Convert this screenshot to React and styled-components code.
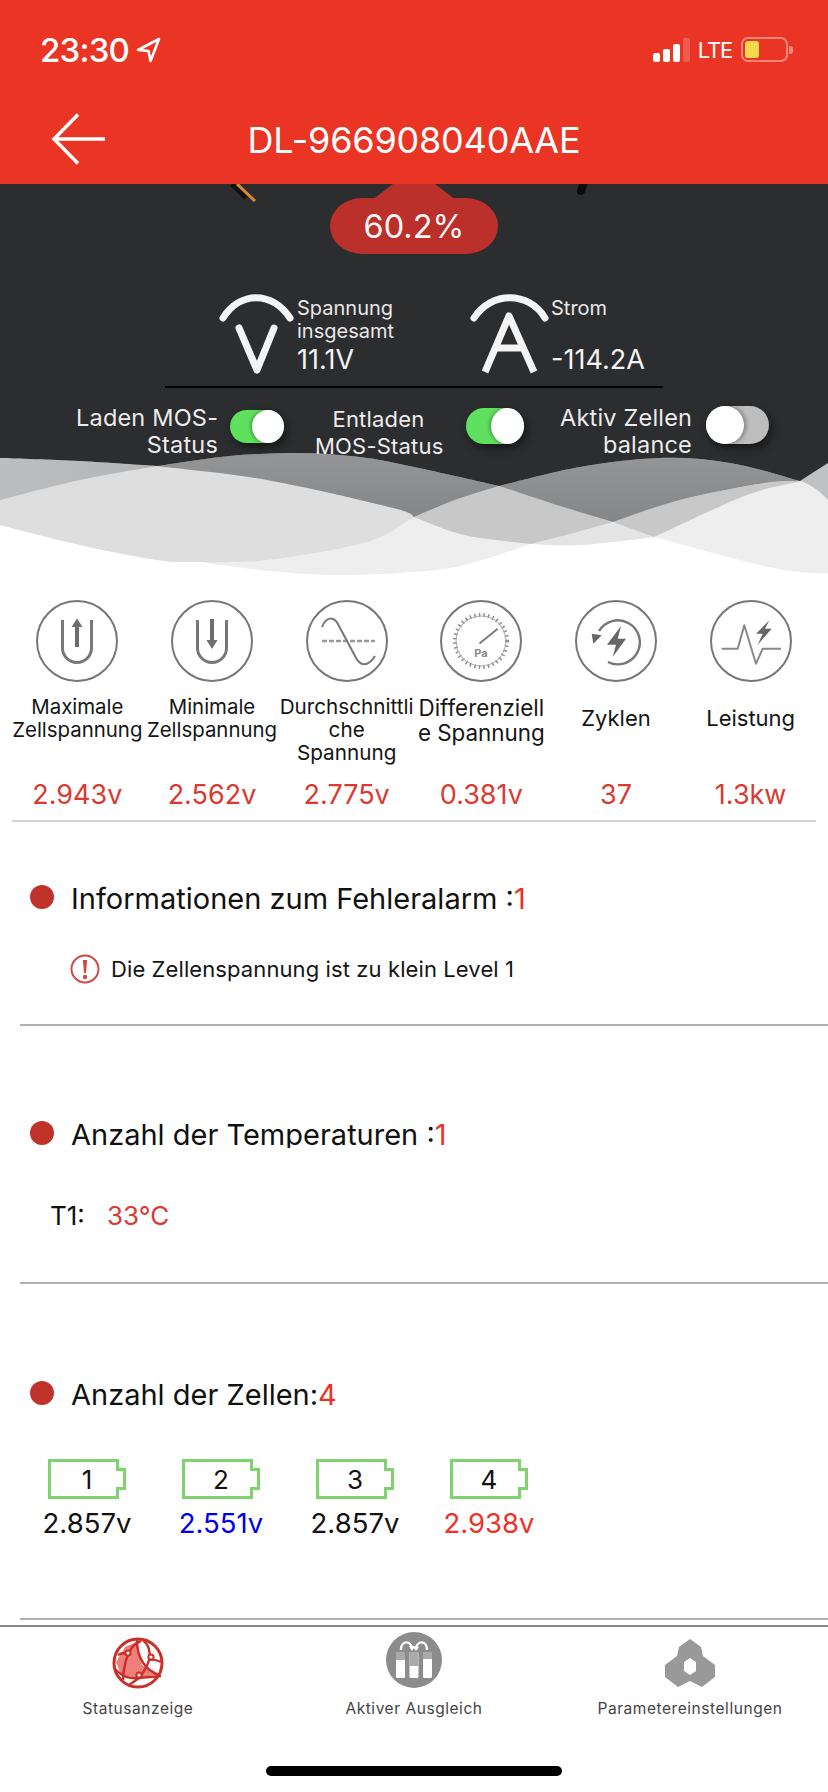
import React from 'react';
import styled, { createGlobalStyle } from 'styled-components';

const Global = createGlobalStyle`
  html, body { margin: 0; padding: 0; background: #fff; }
  body { font-family: Inter, "Noto Sans", sans-serif; }
  * { box-sizing: border-box; }
`;

const RED = '#d93a32';
const Page = styled.div`width: 828px; height: 1792px; overflow: hidden; background: #fff; color: #111;`;

const Header = styled.header`height: 184px; background: #ea3525; color: #fff; display: flex; flex-direction: column;`;
const StatusBar = styled.div`height: 98px; padding: 37px 40px 0 40px; display: flex; justify-content: space-between; align-items: flex-start;`;
const Clock = styled.div`display: flex; align-items: center; gap: 7px; height: 25px; font-size: 33px; font-weight: 500; letter-spacing: -0.8px;`;
const StatusRight = styled.div`display: flex; align-items: center; height: 25px; gap: 8px;`;
const Signal = styled.div`display: flex; align-items: flex-end; gap: 3px; height: 24px;`;
const Bar = styled.span`width: 7px; height: ${p => p.$h}px; border-radius: 2px; background: ${p => p.$dim ? 'rgba(255,255,255,.2)' : '#fff'};`;
const Lte = styled.span`font-size: 22px; font-weight: 400; letter-spacing: -1.2px; margin-right: 1px;`;
const Cell = styled.div`position: relative; width: 47px; height: 25px; border: 2px solid rgba(255,255,255,.4); border-radius: 7px; padding: 2px;
  &::after { content: ''; position: absolute; right: -7px; top: 7px; width: 4px; height: 8px; border-radius: 0 3px 3px 0; background: rgba(255,255,255,.4); }`;
const CellFill = styled.div`width: 14px; height: 17px; border-radius: 3px; background: #f6d64a;`;
const NavBar = styled.div`position: relative; height: 86px; display: flex; align-items: center; justify-content: center; padding-bottom: 2px;`;
const Back = styled.svg`position: absolute; left: 51px; top: 15px;`;
const Title = styled.h1`margin: 0; font-size: 36px; font-weight: 400; letter-spacing: -0.2px;`;

const Dark = styled.section`position: relative; height: 276px; background: #2c2d2f; color: #f0f0f0; padding-top: 14px;`;
const GaugeBits = styled.svg`position: absolute; left: 0; top: 0;`;
const Badge = styled.div`position: relative; width: 168px; height: 56px; margin: 0 auto; background: #bb302a; border-radius: 32px / 28px; display: flex; align-items: center; justify-content: center; font-size: 32.5px; color: #f4f4f4;
  &::before { content: ''; position: absolute; left: 42px; top: -14px; width: 84px; height: 16px; background: #bb302a; clip-path: polygon(21px 0, 63px 0, 84px 100%, 0 100%); }`;
const Readings = styled.div`display: flex; margin: 40px 0 0 220px; height: 80px;`;
const Reading = styled.div`display: flex; width: ${p => p.$w}px; gap: 4px;`;
const ReadingIcon = styled.svg`flex: none; overflow: visible;`;
const ReadingText = styled.div`display: flex; flex-direction: column; font-size: 20px; line-height: 23px; padding-top: 3px; color: #e8e8e8;`;
const ReadingLabel = styled.div`height: 52px;`;
const ReadingValue = styled.div`font-size: 27px; line-height: 28px; color: #f4f4f4;`;
const BlackRule = styled.div`width: 498px; height: 2px; margin: 12px 0 0 165px; background: #000;`;
const Switches = styled.div`position: relative; z-index: 2; display: flex; margin: 16px 0 0 76px;`;
const SwitchItem = styled.div`display: flex; align-items: flex-start; margin-right: ${p => p.$after}px;`;
const SwitchLabel = styled.div`flex: none; width: ${p => p.$w}px; text-align: ${p => p.$align}; white-space: nowrap; font-size: ${p => p.$fs}px; line-height: 27px; margin-top: ${p => p.$top}px; margin-right: ${p => p.$gap}px; color: #ececec; letter-spacing: 0.2px;`;
const Track = styled.div`position: relative; flex: none; width: ${p => p.$w}px; height: ${p => p.$h}px; margin-top: ${p => p.$top}px; border-radius: ${p => p.$h / 2}px; background: ${p => p.$on ? '#5fe05f' : '#bdbdbd'}; box-shadow: 3px 5px 8px rgba(0,0,0,.45);`;
const Knob = styled.div`position: absolute; top: 0; bottom: 0; ${p => p.$on ? 'right: 0;' : 'left: 0;'} width: ${p => p.$w}px; border-radius: 50%; background: #fff; box-shadow: ${p => p.$on ? '-2px 0 3px rgba(0,0,0,.25)' : '2px 0 4px rgba(0,0,0,.35)'};`;

const WaveArt = styled.svg`position: relative; display: block; margin-top: -20px;`;

const Stats = styled.div`display: grid; grid-template-columns: repeat(6, 1fr); padding: 10px 10px 0;`;
const Stat = styled.div`display: flex; flex-direction: column; align-items: center; min-width: 0;`;
const StatLabel = styled.div`width: 140px; height: 81px; margin: 13px -3px 0; text-align: center; font-size: ${p => p.$fs}px; line-height: ${p => p.$lh}px; white-space: nowrap; color: #151515;`;
const StatValue = styled.div`font-size: 27px; line-height: 38px; color: ${RED};`;
const StatRule = styled.div`height: 2px; margin: 6px 12px 0; background: #d0d0d8;`;

const Section = styled.section`margin-left: 20px; padding: ${p => p.$pt}px 0 ${p => p.$pb}px; border-bottom: 2px solid #b0b0b0;`;
const SectionHead = styled.div`display: flex; align-items: center; gap: 17px; height: 40px; padding-left: 10px;`;
const Dot = styled.span`flex: none; width: 24px; height: 24px; margin-top: -4px; border-radius: 50%; background: #bf332b;`;
const HeadText = styled.div`font-size: 29px; line-height: 40px; color: #111; align-self: flex-start; height: ${p => p.$clip ? '33px' : 'auto'}; overflow: ${p => p.$clip ? 'hidden' : 'visible'};`;
const Count = styled.span`color: #ee3124;`;
const Alert = styled.div`display: flex; align-items: center; gap: 11px; height: 30px; margin: 35px 0 0 50px; font-size: 22px; color: #151515; letter-spacing: 0.1px;`;
const TempRow = styled.div`display: flex; height: 30px; margin: 45px 0 0 30px; align-items: center; font-size: 26px;`;
const TempName = styled.span`width: 57px; color: #111;`;
const TempValue = styled.span`color: ${RED};`;
const Cells = styled.div`display: grid; grid-template-columns: repeat(4, 134px); margin-top: 44px;`;
const CellItem = styled.div`display: flex; flex-direction: column; align-items: center;`;
const BatteryBody = styled.div`position: relative; width: 78px; height: 40px; display: flex; align-items: center; justify-content: center; font-size: 26px; color: #111;`;
const BatteryArt = styled.svg`position: absolute; inset: 0;`;
const CellNumber = styled.span`position: relative;`;
const CellVolt = styled.div`margin-top: 9px; font-size: 27.5px; line-height: 30px; color: ${p => p.$c};`;

const TabBar = styled.nav`position: relative; height: 167px; margin-top: 5px; border-top: 2px solid #888; display: grid; grid-template-columns: repeat(3, 276px);`;
const Tab = styled.div`display: flex; flex-direction: column; align-items: center; font-size: 15.5px; color: #444; letter-spacing: 0.55px;`;
const TabIcon = styled.svg`display: block; height: 62px; width: 70px;`;
const TabText = styled.div`margin-top: 10px; line-height: 20px;`;
const HomeBar = styled.div`position: absolute; left: 266px; top: 139px; width: 296px; height: 10px; border-radius: 5px; background: #000;`;

const seg = (pts) => {
  let d = '';
  for (let i = 0; i < pts.length - 1; i++) {
    const p0 = pts[i - 1] || pts[i], p1 = pts[i], p2 = pts[i + 1], p3 = pts[i + 2] || p2;
    d += ` C${p1[0] + (p2[0] - p0[0]) / 6} ${p1[1] + (p2[1] - p0[1]) / 6} ${p2[0] - (p3[0] - p1[0]) / 6} ${p2[1] - (p3[1] - p1[1]) / 6} ${p2[0]} ${p2[1]}`;
  }
  return d;
};
const rev = (a) => [...a].reverse();
const shape = (...parts) => `M${parts[0][0][0]} ${parts[0][0][1]}` + parts.map(seg).join('') + ' Z';

const c1a = [[0, 458], [80, 461], [157, 466]];
const c1b = [[157, 466], [267, 480], [393, 508], [414, 517]];
const c1c = [[414, 517], [464, 535], [531, 544]];
const c1d = [[531, 544], [580, 545], [654, 537]];
const c1e = [[654, 537], [747, 495], [800, 482]];
const c2a = [[0, 500], [80, 480], [157, 466]];
const c2b = [[157, 466], [230, 456], [300, 453], [360, 457], [414, 467], [499, 486]];
const c2c = [[499, 486], [560, 506], [613, 522]];
const c2d = [[613, 522], [635, 530], [654, 537]];
const c2e = [[654, 537], [747, 562], [790, 571], [814, 573], [828, 573]];
const c3a = [[0, 525], [80, 545], [157, 560], [200, 562], [267, 560], [367, 542], [414, 517]];
const c3b = [[414, 517], [455, 500], [499, 486]];
const c3c = [[499, 486], [580, 467], [660, 458], [730, 463], [800, 481]];
const c4a = [[200, 562], [270, 571], [333, 575], [414, 572], [464, 565], [531, 544]];
const c4b = [[531, 544], [570, 534], [613, 522]];
const c4c = [[613, 522], [680, 500], [764, 483], [800, 481]];

const Waves = () => (
  <WaveArt width="828" height="150" viewBox="0 440 828 150">
    <defs>
      <linearGradient id="gm" x1="0" y1="0" x2="0" y2="1"><stop offset="0" stopColor="#949597" /><stop offset="1" stopColor="#858688" /></linearGradient>
      <linearGradient id="gl" x1="0" y1="0" x2="1" y2="0"><stop offset="0" stopColor="#bcbdbf" /><stop offset="1" stopColor="#b4b5b7" /></linearGradient>
    </defs>
    <path fill="#eeeeee" d={`M0 440 L828 440 L828 573 L${814} 573` + seg(rev(c2e).slice(1)) + seg(rev(c1d)) + seg(rev(c4a)) + seg(rev(c3a.slice(0, 4))) + ' Z'} />
    <path fill="#dedede" d={`M0 440 L414 440 L414 517` + seg(rev(c3a)) + ' Z'} />
    <path fill="#e4e4e4" d={shape(c4b, c2d, rev(c1d))} />
    <path fill="#c8c8c8" d={shape(c3b, c2c, rev(c4b), rev(c1c))} />
    <path fill="#c8c8c8" d={shape(c4c, rev(c1e), rev(c2d))} />
    <path fill="url(#gm)" d={shape(c2b, rev(c3b), rev(c1b))} />
    <path fill="url(#gm)" d={shape(c3c, rev(c4c), rev(c2c))} />
    <path fill="url(#gl)" d={shape(c1a, rev(c2a))} />
    <path fill="#c0c1c3" d="M800 481 L828 463 L828 500 C820 491 810 484 800 481 Z" />
    <path fill="#2c2d2f" d={`M0 440 L828 440 L828 463 L800 481` + seg(rev(c3c)) + seg(rev(c2b)) + seg(rev(c1a)) + ' Z'} />
  </WaveArt>
);

const G = '#777';
const Ring = ({ children }) => (
  <svg width="82" height="82" viewBox="0 0 82 82" fill="none">
    <circle cx="41" cy="41" r="40" stroke={G} strokeWidth="2" />
    {children}
  </svg>
);
const UTube = () => <path d="M26.5 20 V48 a14.5 14.5 0 0 0 29 0 V20" stroke={G} strokeWidth="3" />;

const icons = [
  <Ring><UTube /><path d="M39 47 V27 H35.5 L41 18.5 L46.5 27 H43 V47 Z" fill="#6e6e6e" /></Ring>,
  <Ring><UTube /><path d="M39 19 V40 H35.5 L41 49 L46.5 40 H43 V19 Z" fill="#6e6e6e" /></Ring>,
  <Ring>
    <path d="M16 41 H69" stroke="#999" strokeWidth="2.4" strokeDasharray="5 2" />
    <path d="M16 27 C20 17 28 15 33 26 L49 56 C54 67 62 67 69 56" stroke={G} strokeWidth="2" />
  </Ring>,
  <Ring>
    <circle cx="41" cy="41" r="26" stroke="#8a8a8a" strokeWidth="4" strokeDasharray="1.4 3.2" />
    <circle cx="41" cy="41" r="25" stroke="#aaa" strokeWidth="1" />
    <path d="M39.5 43.5 L57.7 28.7" stroke={G} strokeWidth="1.8" />
    <text x="41" y="57" fontSize="11" fontWeight="700" fill="#888" textAnchor="middle" fontFamily="Inter, sans-serif">Pa</text>
  </Ring>,
  <Ring>
    <path d="M24 31 A22 22 0 1 1 33 62" stroke={G} strokeWidth="2.4" />
    <path d="M16.7 33.7 L26.7 35.3 L18.3 43.7 Z" fill="#666" />
    <path d="M46 26 L32 44.7 H41 L37.7 57 L51 38.7 H42.7 Z" fill="#666" />
  </Ring>,
  <Ring>
    <path d="M11.7 48.7 H27.7 L34.3 25.3 L46 63.7 L52.7 48.7 H71" stroke="#888" strokeWidth="2" strokeLinejoin="round" />
    <path d="M59.3 20.3 L46 33.7 H52.7 L47.7 44.7 L61.7 28.7 H55 Z" fill="#666" />
  </Ring>,
];

const stats = [
  { label: <>Maximale<br />Zellspannung</>, value: '2.943v', lh: 23, fs: 20.4 },
  { label: <>Minimale<br />Zellspannung</>, value: '2.562v', lh: 23, fs: 20.4 },
  { label: <>Durchschnittli<br />che<br />Spannung</>, value: '2.775v', lh: 23, fs: 20.7 },
  { label: <>Differenziell<br />e Spannung</>, value: '0.381v', lh: 25, fs: 22.4 },
  { label: 'Zyklen', value: '37', lh: 46, fs: 22 },
  { label: 'Leistung', value: '1.3kw', lh: 46, fs: 22 },
];

const cells = [
  { n: 1, v: '2.857v', c: '#111' },
  { n: 2, v: '2.551v', c: '#0000ee' },
  { n: 3, v: '2.857v', c: '#111' },
  { n: 4, v: '2.938v', c: '#ee3124' },
];

const Battery = ({ n }) => (
  <BatteryBody>
    <BatteryArt width="78" height="40" viewBox="0 0 78 40" fill="none">
      <path d="M1.5 1.5 H69.5 V10.5 H76.5 V29.5 H69.5 V38.5 H1.5 Z" stroke="#7ed36f" strokeWidth="3" />
    </BatteryArt>
    <CellNumber>{n}</CellNumber>
  </BatteryBody>
);

export default function App() {
  return (
    <Page>
      <Global />
      <Header>
        <StatusBar>
          <Clock>
            23:30
            <svg width="26" height="26" viewBox="0 0 26 26" fill="none">
              <path d="M23 2 L2 13 L12.5 14 L14.5 24 Z" stroke="#fff" strokeWidth="2.6" strokeLinejoin="round" />
            </svg>
          </Clock>
          <StatusRight>
            <Signal>
              <Bar $h={9} /><Bar $h={13} /><Bar $h={18} /><Bar $h={24} $dim />
            </Signal>
            <Lte>LTE</Lte>
            <Cell><CellFill /></Cell>
          </StatusRight>
        </StatusBar>
        <NavBar>
          <Back width="56" height="52" viewBox="0 0 56 52" fill="none">
            <path d="M3 26 H54 M27 1.5 L3 26 L27 50.5" stroke="#fff" strokeWidth="3.5" />
          </Back>
          <Title>DL-966908040AAE</Title>
        </NavBar>
      </Header>

      <Dark>
        <GaugeBits width="828" height="18" viewBox="0 184 828 18" fill="none">
          <path d="M232 184 L246 198" stroke="#111" strokeWidth="5" />
          <path d="M237 184 L255 201" stroke="#d98a2b" strokeWidth="3" />
          <path d="M584 182 L581 191" stroke="#0c0c0c" strokeWidth="8" strokeLinecap="round" />
        </GaugeBits>
        <Badge>60.2%</Badge>
        <Readings>
          <Reading $w={251}>
            <ReadingIcon width="73" height="80" viewBox="0 0 73 80" fill="none">
              <path d="M3 24 C20 -3 52 -3 70 24" stroke="#f4f4f4" strokeWidth="7" strokeLinecap="round" />
              <path d="M19 34 L37 76 L54 34" stroke="#f4f4f4" strokeWidth="7" strokeLinecap="round" strokeLinejoin="round" />
            </ReadingIcon>
            <ReadingText>
              <ReadingLabel>Spannung<br />insgesamt</ReadingLabel>
              <ReadingValue>11.1V</ReadingValue>
            </ReadingText>
          </Reading>
          <Reading $w={250}>
            <ReadingIcon width="76" height="80" viewBox="0 0 76 80" fill="none">
              <path d="M3 24 C20 -3 58 -3 74 24" stroke="#f4f4f4" strokeWidth="7" strokeLinecap="round" />
              <path d="M14 78 L38 22 L63 78 M23 54 H54" stroke="#f4f4f4" strokeWidth="7" strokeLinejoin="round" />
            </ReadingIcon>
            <ReadingText>
              <ReadingLabel>Strom</ReadingLabel>
              <ReadingValue>-114.2A</ReadingValue>
            </ReadingText>
          </Reading>
        </Readings>
        <BlackRule />
        <Switches>
          <SwitchItem $after={31}>
            <SwitchLabel $w={142} $fs={23.5} $align="right" $gap={12} $top={0}>Laden MOS-<br />Status</SwitchLabel>
            <Track $w={54} $h={33} $top={6} $on><Knob $on $w={32} /></Track>
          </SwitchItem>
          <SwitchItem $after={36}>
            <SwitchLabel $w={127} $fs={22} $align="center" $gap={24} $top={2}>Entladen<br />MOS-Status</SwitchLabel>
            <Track $w={58} $h={36} $top={4} $on><Knob $on $w={33} /></Track>
          </SwitchItem>
          <SwitchItem $after={0}>
            <SwitchLabel $w={132} $fs={23.5} $align="right" $gap={14} $top={0}>Aktiv Zellen<br />balance</SwitchLabel>
            <Track $w={63} $h={38} $top={2}><Knob $w={38} /></Track>
          </SwitchItem>
        </Switches>
      </Dark>
      <Waves />

      <Stats>
        {stats.map((s, i) => (
          <Stat key={i}>
            {icons[i]}
            <StatLabel $lh={s.lh} $fs={s.fs}>{s.label}</StatLabel>
            <StatValue>{s.value}</StatValue>
          </Stat>
        ))}
      </Stats>
      <StatRule />

      <Section $pt={57} $pb={40}>
        <SectionHead>
          <Dot />
          <HeadText>Informationen zum Fehleralarm :<Count>1</Count></HeadText>
        </SectionHead>
        <Alert>
          <svg width="30" height="30" viewBox="0 0 30 30" fill="none">
            <circle cx="15" cy="15" r="13.5" stroke="#cf4a44" strokeWidth="2" />
            <path d="M12.8 6 H17.2 L16 19 H14 Z" fill="#cf4a44" />
            <circle cx="15" cy="23" r="2.2" fill="#cf4a44" />
          </svg>
          Die Zellenspannung ist zu klein Level 1
        </Alert>
      </Section>

      <Section $pt={89} $pb={52}>
        <SectionHead>
          <Dot />
          <HeadText $clip>Anzahl der Temperaturen :<Count>1</Count></HeadText>
        </SectionHead>
        <TempRow>
          <TempName>T1:</TempName>
          <TempValue>33°C</TempValue>
        </TempRow>
      </Section>

      <Section $pt={91} $pb={80}>
        <SectionHead>
          <Dot />
          <HeadText>Anzahl der Zellen:<Count>4</Count></HeadText>
        </SectionHead>
        <Cells>
          {cells.map((c) => (
            <CellItem key={c.n}>
              <Battery n={c.n} />
              <CellVolt $c={c.c}>{c.v}</CellVolt>
            </CellItem>
          ))}
        </Cells>
      </Section>

      <TabBar>
        <Tab>
          <TabIcon viewBox="0 0 70 62" fill="none">
            <g transform="translate(0 6)">
              <path d="M13 29 L22 14 L33 9 L39 32 L57 41 L35 45 L18 42 Z" fill="#f07f7b" />
              <ellipse cx="35" cy="30" rx="24" ry="24" stroke="#c9302a" strokeWidth="3" />
              <g stroke="#c9302a" strokeWidth="2.4">
                <path d="M34 7 C34 22 40 36 57 43" />
                <path d="M12 36 C20 44 26 46 36 45 C44 44 50 44 58 43" />
                <path d="M40 7 C46 12 48 18 46 27 C44 35 40 40 36 45" />
                <path d="M46 27 C50 26 54 27 58 29" />
                <path d="M25 21 C22 30 20 40 20 47" />
                <path d="M25 21 C28 15 32 10 38 8" />
                <path d="M25 21 C22 20 18 20 15 22" />
                <path d="M36 45 C32 48 29 50 26 52" />
              </g>
              <g fill="#fff" stroke="#c9302a" strokeWidth="2">
                <circle cx="25" cy="20" r="2.6" />
                <circle cx="48" cy="24" r="2.6" />
                <circle cx="36" cy="42" r="2.6" />
              </g>
            </g>
          </TabIcon>
          <TabText>Statusanzeige</TabText>
        </Tab>
        <Tab>
          <TabIcon viewBox="0 0 70 62" fill="none">
            <circle cx="35" cy="33" r="28" fill="#8c8c8c" />
            <g fill="#fff">
              <rect x="17" y="25" width="9" height="26" rx="1.5" />
              <rect x="30.5" y="25" width="9" height="26" rx="1.5" />
              <rect x="44" y="25" width="9" height="26" rx="1.5" />
            </g>
            <g fill="#aaa">
              <rect x="17" y="25" width="9" height="8" />
              <rect x="30.5" y="25" width="9" height="14" />
              <rect x="44" y="25" width="9" height="7" />
            </g>
            <path d="M22 23 C22 13 32 13 33 22 M48 23 C48 13 38 13 37 22" stroke="#fff" strokeWidth="2.4" />
            <path d="M33 24 L30 19 L36 19 Z M37 24 L34 20 L40 20 Z" fill="#fff" />
          </TabIcon>
          <TabText>Aktiver Ausgleich</TabText>
        </Tab>
        <Tab>
          <TabIcon viewBox="0 0 70 62" fill="none">
            <path fillRule="evenodd" fill="#999" d="M35 12 L46 20 L48 29 L60 38 V50 L47 60 L35 54 L23 60 L10 50 V38 L22 29 L24 20 Z M35 31 L29 35 V44 L35 48 L41 44 V35 Z" />
          </TabIcon>
          <TabText>Parametereinstellungen</TabText>
        </Tab>
        <HomeBar />
      </TabBar>
    </Page>
  );
}
